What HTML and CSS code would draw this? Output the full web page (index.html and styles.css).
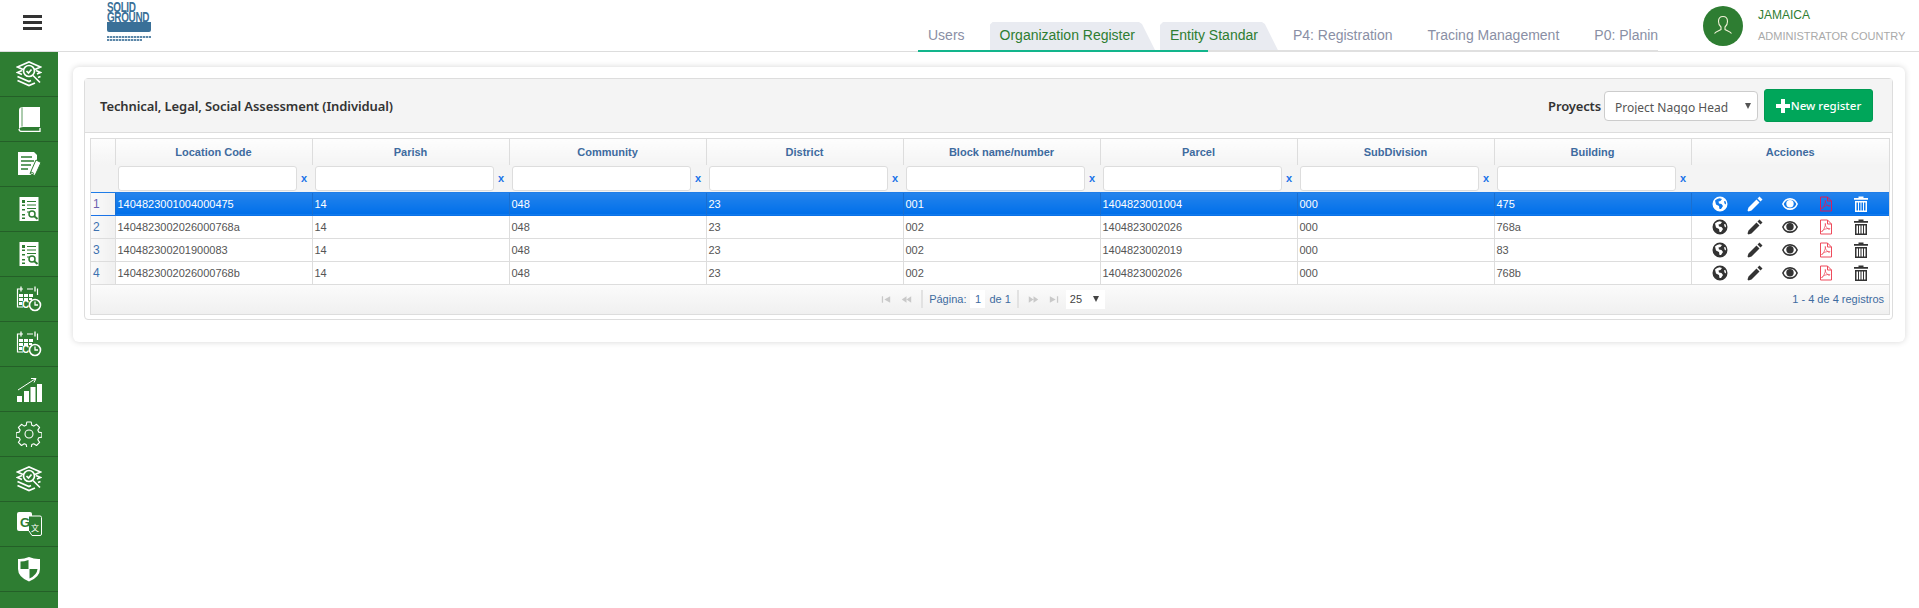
FILE: index.html
```html
<!DOCTYPE html>
<html lang="en">
<head>
    <meta charset="UTF-8">
    <title>Technical, Legal, Social Assessment</title>
    <link rel="stylesheet" href="styles.css">
</head>
<body>
    <!-- shared icons -->
    <svg class="defs" width="0" height="0">
        <symbol id="i-layers" viewBox="0 0 26 26">
            <path d="M7 8.500L1.500 6 13 1l11.500 5L19 8.500" fill="none" stroke="#fff" stroke-width="1.700"/>
            <path d="M6 9.500L1.500 11.500 6 13.500M20 9.500l4.500 2L21 13M1.500 15.500L13 20.500l2-1M1.500 19.500L13 24.500l6-2.500M24.500 15.500L22 16.500" fill="none" stroke="#fff" stroke-width="1.700"/>
            <circle cx="13" cy="10" r="5.500" fill="none" stroke="#fff" stroke-width="1.700"/>
            <path d="M10.500 10l2 2 3-3.500M17 14.500l7 7" fill="none" stroke="#fff" stroke-width="1.700"/>
        </symbol>
        <symbol id="i-book" viewBox="0 0 26 26">
            <path d="M7 1h17v20H7q-3 0-4 2V4q0-3 4-3z" fill="#fff"/>
            <path d="M3 23q0 2.500 3 2.500h18V22" fill="none" stroke="#fff" stroke-width="1.300"/>
            <path d="M6 1.500v19" stroke="#2e7d32" stroke-width=".8"/>
        </symbol>
        <symbol id="i-doc" viewBox="0 0 26 26">
            <path d="M2 1h16l3 3v9l-6 11H2z" fill="#fff"/>
            <path d="M5 6h11M5 10h13M5 14h10M5 18h7" stroke="#2e7d32" stroke-width="1.600"/>
            <path d="M20 9l5 2.500-6 13-5-2z" fill="#fff" stroke="#2e7d32" stroke-width="1"/>
            <path d="M15 21l3 1.500" stroke="#2e7d32" stroke-width="1"/>
        </symbol>
        <symbol id="i-list" viewBox="0 0 26 26">
            <path d="M3.500 1h19v24h-19z" fill="#fff"/>
            <path d="M6 4h3v3H6zM6 8.500h3v1.500H6zM6 13h3v1.500H6zM6 18h3v1.500H6zM6 21.500h3V23H6z" fill="#2e7d32"/>
            <path d="M11 5.500h9M11 9h9M11 12.500h9M11 16h2" stroke="#2e7d32" stroke-width="1.200"/>
            <circle cx="16" cy="18" r="3" fill="none" stroke="#2e7d32" stroke-width="1.500"/>
            <path d="M18 20l3.500 3" stroke="#2e7d32" stroke-width="2"/>
        </symbol>
        <symbol id="i-cal" viewBox="0 0 26 26">
            <path d="M7 3H1.500v18H7M11 3h6M21 3h.5v6" fill="none" stroke="#fff" stroke-width="1.200"/>
            <path d="M5 .5v5M19 .5v5" stroke="#fff" stroke-width="1.300"/>
            <path d="M3 8h4v3H3zM8 8h4v3H8zM13 8h4v3h-4zM3 12h4v3H3zM8 12h4v3H8zM13 12h3v2h-3zM3 16h3v3H3z" fill="#fff"/>
            <circle cx="19" cy="19" r="5.500" fill="#2e7d32" stroke="#fff" stroke-width="1.600"/>
            <path d="M19 15.500V19h3" fill="none" stroke="#fff" stroke-width="1.300"/>
        </symbol>
        <symbol id="i-chart" viewBox="0 0 26 26">
            <path d="M2 14L19 3M15 2.500l5 0-2 4" fill="none" stroke="#fff" stroke-width="1"/>
            <path d="M1 20h5v6H1zM8 15h5v11H8zM14.500 11h5v15h-5zM21 8h5v18h-5z" fill="#fff"/>
        </symbol>
        <symbol id="i-gear" viewBox="0 0 26 26">
            <path d="M10.800 1h4.400l.6 3.200 2 .9 2.700-1.800 3.100 3.100-1.800 2.700.9 2 3.200.6v4.400l-3.200.6-.9 2 1.800 2.700-3.100 3.100-2.700-1.800-2 .9-.6 3.200h-4.400l-.6-3.200-2-.9-2.700 1.800-3.100-3.100 1.800-2.700-.9-2-3.200-.6v-4.400l3.200-.6.9-2-1.800-2.700 3.100-3.100 2.700 1.800 2-.9z" fill="none" stroke="#fff" stroke-width="1.100" stroke-linejoin="round"/>
            <circle cx="13" cy="13" r="4" fill="none" stroke="#fff" stroke-width="1.100"/>
        </symbol>
        <symbol id="i-trans" viewBox="0 0 26 26">
            <rect x="1" y="1" width="15" height="19" rx="2" fill="#fff"/>
            <path d="M13 5h11q1.500 0 1.500 1.500V23q0 1.500-1.500 1.500H16L13 20" fill="#2e7d32" stroke="#fff" stroke-width="1"/>
        </symbol>
        <symbol id="i-shield" viewBox="0 0 26 26">
            <path d="M13 1q6 2.500 11 2v10q0 8-11 12.500Q2 21 2 13V3q5 .5 11-2z" fill="#fff"/>
            <path d="M12.500 4Q8 5.500 4.500 5.500V13h8zM13.500 13h8q-.5 6-8 9.500z" fill="#2e7d32"/>
        </symbol>
        <symbol id="a-globe" viewBox="0 0 16 16">
            <path fill-rule="evenodd" d="M8 .5a7.500 7.500 0 1 0 0 15a7.500 7.500 0 0 0 0-15zM3 4.500q2-2 4.500-2.300L10 3 8.500 5 6.500 5.500 7 7.500 9.500 8 11 10 9 13 7.500 13 7 10 4 8.500zM12 5l1.800.5.200 3-1.500-1z"/>
        </symbol>
        <symbol id="a-pencil" viewBox="0 0 16 16">
            <path d="M12.500.5l3 3-2 2-3-3zM9.500 3.500l3 3-8 8-3 1-1-1 1-3z"/>
        </symbol>
        <symbol id="a-eye" viewBox="0 0 16 16">
            <path fill-rule="evenodd" d="M8 2Q13.500 2 16 8q-2.500 6-8 6T0 8Q2.500 2 8 2zM8 3.700Q3.500 3.700 1.700 8 3.500 12.300 8 12.300t6.300-4.300Q12.500 3.700 8 3.700z"/>
            <circle cx="8" cy="7.800" r="3.700"/>
        </symbol>
        <symbol id="a-pdf" viewBox="0 0 16 16">
            <path d="M2.500 1h7l4 4v10h-11zM9.500 1v4h4" fill="none" stroke="currentColor" stroke-width="1"/>
            <path d="M3.500 13q2.500-1.500 4-7 .3-2-.5-1.500-.5 2 3 5.500 2 .8 2-.3-1-1-6 .7-2 1.500-2.500 2.600z" fill="none" stroke="currentColor" stroke-width=".7"/>
        </symbol>
        <symbol id="a-trash" viewBox="0 0 16 16">
            <path d="M5.500 .5h5V2h4.500v1.800H1V2h4.500z"/>
            <path fill-rule="evenodd" d="M2 5h12v11H2zM3.500 6.500v8h1.500v-8zM6 6.500v8h1.500v-8zM8.500 6.500v8H10v-8zM11 6.500v8h1.500v-8z"/>
        </symbol>
    </svg>

    <header class="topbar">
        <button class="menu-toggle" type="button" aria-label="Menu"><span></span><span></span><span></span></button>

        <div class="logo">
            <div class="logo-word">SOLID</div>
            <div class="logo-word">GROUND</div>
            <div class="logo-block"></div>
            <div class="logo-small"></div>
            <div class="logo-small logo-small-short"></div>
        </div>

        <nav class="tabs">
            <div class="tabs-row">
                <a class="tab">Users</a>
                <a class="tab tab-open">Organization Register</a>
                <a class="tab tab-open">Entity Standar</a>
                <a class="tab">P4: Registration</a>
                <a class="tab">Tracing Management</a>
                <a class="tab">P0: Planing</a>
            </div>
            <div class="tabs-line"></div>
        </nav>

        <div class="user">
            <div class="avatar">
                <svg width="24" height="24" viewBox="0 0 24 24" fill="none" stroke="#f2f2d8" stroke-width="1.100">
                    <path d="M12 2.500c-3 0-4.500 2.300-4.500 5 0 2.500 1.200 4.500 2.500 5.500v2.500c-1.500 1.200-5 2-6.500 4M12 2.500c3 0 4.500 2.300 4.500 5 0 2.500-1.200 4.500-2.500 5.500v2.500c1.500 1.200 5 2 6.500 4"/>
                </svg>
            </div>
            <div class="user-text">
                <div class="user-name">JAMAICA</div>
                <div class="user-role">ADMINISTRATOR COUNTRY</div>
            </div>
        </div>
    </header>

    <div class="layout">
        <aside class="sidebar">
            <a class="side-item"><svg class="side-icon"><use href="#i-layers"/></svg></a>
            <a class="side-item"><svg class="side-icon"><use href="#i-book"/></svg></a>
            <a class="side-item"><svg class="side-icon"><use href="#i-doc"/></svg></a>
            <a class="side-item"><svg class="side-icon"><use href="#i-list"/></svg></a>
            <a class="side-item"><svg class="side-icon"><use href="#i-list"/></svg></a>
            <a class="side-item"><svg class="side-icon"><use href="#i-cal"/></svg><span class="cal-letter">C</span></a>
            <a class="side-item"><svg class="side-icon"><use href="#i-cal"/></svg><span class="cal-letter">C</span></a>
            <a class="side-item"><svg class="side-icon"><use href="#i-chart"/></svg></a>
            <a class="side-item"><svg class="side-icon"><use href="#i-gear"/></svg></a>
            <a class="side-item"><svg class="side-icon"><use href="#i-layers"/></svg></a>
            <a class="side-item"><svg class="side-icon"><use href="#i-trans"/></svg><span class="trans-g">G</span><span class="trans-x">文</span></a>
            <a class="side-item"><svg class="side-icon"><use href="#i-shield"/></svg></a>
        </aside>

        <main class="content">
            <section class="card">
                <div class="panel">
                    <div class="panel-head">
                        <h1 class="panel-title">Technical, Legal, Social Assessment (Individual)</h1>
                        <div class="panel-tools">
                            <label class="project-label">Proyects</label>
                            <div class="project-select">
                                <span>Project Naggo Head</span>
                                <i class="caret"></i>
                            </div>
                            <button class="btn-new" type="button"><span class="btn-plus"></span>New register</button>
                        </div>
                    </div>

                    <div class="panel-body">
                        <div class="grid">
                            <table class="grid-table">
                                <colgroup>
                                    <col class="col-num">
                                    <col span="8" class="col-data">
                                    <col>
                                </colgroup>
                                <thead>
                                    <tr class="head-row">
                                        <th></th>
                                        <th>Location Code</th>
                                        <th>Parish</th>
                                        <th>Community</th>
                                        <th>District</th>
                                        <th>Block name/number</th>
                                        <th>Parcel</th>
                                        <th>SubDivision</th>
                                        <th>Building</th>
                                        <th>Acciones</th>
                                    </tr>
                                    <tr class="filter-row">
                                        <th></th>
                                        <th><div class="filter"><input type="text"><b>x</b></div></th>
                                        <th><div class="filter"><input type="text"><b>x</b></div></th>
                                        <th><div class="filter"><input type="text"><b>x</b></div></th>
                                        <th><div class="filter"><input type="text"><b>x</b></div></th>
                                        <th><div class="filter"><input type="text"><b>x</b></div></th>
                                        <th><div class="filter"><input type="text"><b>x</b></div></th>
                                        <th><div class="filter"><input type="text"><b>x</b></div></th>
                                        <th><div class="filter"><input type="text"><b>x</b></div></th>
                                        <th></th>
                                    </tr>
                                </thead>
                                <tbody id="gridBody"></tbody>
                            </table>

                            <div class="pager">
                                <div></div>
                                <div class="pager-center">
                                    <svg class="pg" viewBox="0 0 12 8"><path d="M1 0h1.500v8H1zM11 0v8L4 4z"/></svg>
                                    <svg class="pg pg-wide" viewBox="0 0 14 8"><path d="M7 0v8L1 4zM13 0v8L7 4z"/></svg>
                                    <span class="pg-sep"></span>
                                    <span>Página:</span>
                                    <span class="pg-input">1</span>
                                    <span>de 1</span>
                                    <span class="pg-sep"></span>
                                    <svg class="pg pg-wide" viewBox="0 0 14 8"><path d="M1 0v8l6-4zM7 0v8l6-4z"/></svg>
                                    <svg class="pg" viewBox="0 0 12 8"><path d="M1 0v8l7-4zM9.500 0H11v8H9.500z"/></svg>
                                    <div class="pg-size"><span>25</span><i class="caret caret-dark"></i></div>
                                </div>
                                <div class="pager-info">1 - 4 de 4 registros</div>
                            </div>
                        </div>
                    </div>
                </div>
            </section>
        </main>
    </div>

    <script>
        // filas de la tabla
        const filas = [
            ["1404823001004000475", "14", "048", "23", "001", "1404823001004", "000", "475"],
            ["1404823002026000768a", "14", "048", "23", "002", "1404823002026", "000", "768a"],
            ["140482300201900083", "14", "048", "23", "002", "1404823002019", "000", "83"],
            ["1404823002026000768b", "14", "048", "23", "002", "1404823002026", "000", "768b"]
        ];
        const iconos = ["a-globe", "a-pencil", "a-eye", "a-pdf", "a-trash"];
        const tbody = document.getElementById("gridBody");

        filas.forEach(function(fila, i) {
            const row = tbody.insertRow();
            if (i === 0) row.classList.add("selected");

            const num = row.insertCell();
            num.textContent = i + 1;
            num.classList.add("num");

            fila.forEach(function(valor) {
                row.insertCell().textContent = valor;
            });

            const acciones = row.insertCell();
            const caja = document.createElement("div");
            caja.className = "actions";
            caja.innerHTML = iconos.map(function(id) {
                return '<svg class="action ' + id + '"><use href="#' + id + '"/></svg>';
            }).join("");
            acciones.appendChild(caja);
        });
    </script>
</body>
</html>
```

FILE: styles.css
```css
* {
    margin: 0;
    padding: 0;
    box-sizing: border-box;
}

html, body {
    height: 100%;
    overflow: hidden;
}

body {
    font-family: "Liberation Sans", Arial, sans-serif;
    font-size: 11px;
    color: #555;
    background: #fff;
}

.defs {
    position: absolute;
}

/* top bar */
.topbar {
    height: 52px;
    display: flex;
    border-bottom: 1px solid #ddd;
    background: #fff;
}

.menu-toggle {
    width: 58px;
    height: 51px;
    padding: 15px 0 0 23px;
    display: flex;
    flex-direction: column;
    gap: 3px;
    border: none;
    background: none;
}

.menu-toggle span {
    display: block;
    width: 19px;
    height: 3px;
    background: #333;
}

.logo {
    width: 44px;
    margin: 2px 0 0 49px;
    color: #3a7098;
}

.logo-word {
    font-family: "Liberation Sans", Arial, sans-serif;
    font-weight: bold;
    font-size: 15px;
    line-height: 10px;
    letter-spacing: -.5px;
    transform: scaleX(.66);
    transform-origin: left;
    white-space: nowrap;
}

.logo-block {
    height: 10px;
    background: #3a7098;
    border-radius: 0 0 2px 2px;
}

.logo-small {
    height: 2px;
    margin-top: 4px;
    background: repeating-linear-gradient(90deg, #5c87a8 0 2px, #c4d4e0 2px 3px);
}

.logo-small + .logo-small {
    margin-top: 1px;
}

.logo-small-short {
    width: 35px;
}

/* tabs */
.tabs {
    width: 740px;
    margin: 22px 0 -1px 767px;
    overflow: hidden;
}

.tabs-row {
    display: flex;
    height: 28px;
    white-space: nowrap;
}

.tabs-line {
    height: 2px;
    background: linear-gradient(90deg, #12b58c 290px, #e0e0e0 290px);
}

.tab {
    flex: none;
    padding: 5px 25px 0 10px;
    font-size: 14px;
    line-height: 16px;
    color: #8a8fa5;
}

.tab-open {
    margin-left: 0;
    color: #2e7d32;
    background: #e9ebf1;
    clip-path: polygon(3px 0, calc(100% - 21px) 0, calc(100% - 18px) 2px, calc(100% - 5px) 100%, 0 100%, 0 3px);
}

/* user */
.user {
    display: flex;
    margin-left: 45px;
    padding-top: 6px;
}

.avatar {
    width: 40px;
    height: 40px;
    display: flex;
    align-items: center;
    justify-content: center;
    border-radius: 50%;
    background: #2e7d32;
}

.user-text {
    margin-left: 15px;
    font-size: 11px;
    white-space: nowrap;
}

.user-name {
    margin-top: 2px;
    font-size: 12px;
    line-height: 14px;
    color: #2e7d32;
}

.user-role {
    margin-top: 7px;
    line-height: 14px;
    color: #a9a9a9;
}

/* sidebar */
.layout {
    display: flex;
    height: 556px;
}

.sidebar {
    flex: none;
    width: 58px;
    height: 100%;
    overflow: hidden;
    background: #2e7d32;
}

.side-item {
    position: relative;
    height: 45px;
    display: flex;
    align-items: center;
    justify-content: center;
    border-bottom: 1px solid #245f28;
}

.side-icon {
    width: 26px;
    height: 26px;
}

.cal-letter {
    position: absolute;
    left: 22px;
    top: 22px;
    font-size: 10px;
    line-height: 12px;
    font-weight: bold;
    color: #fff;
}

.trans-g {
    position: absolute;
    left: 20px;
    top: 13px;
    font-size: 13px;
    line-height: 15px;
    font-weight: bold;
    color: #2e7d32;
}

.trans-x {
    position: absolute;
    left: 31px;
    top: 21px;
    font-family: "Noto Sans CJK SC", sans-serif;
    font-size: 8px;
    line-height: 10px;
    color: #fff;
}

/* content */
.content {
    flex: 1;
    padding: 15px 14px 0 15px;
}

.card {
    padding: 11px 12px 22px 11px;
    background: #fff;
    border-radius: 6px;
    box-shadow: 0 0 6px rgba(0, 0, 0, .16);
}

.panel {
    border: 1px solid #ddd;
    border-radius: 4px;
}

.panel-head {
    height: 54px;
    padding: 0 15px;
    display: flex;
    align-items: center;
    justify-content: space-between;
    background: #f4f4f4;
    border-bottom: 1px solid #ddd;
}

.panel-title {
    font-family: "Noto Sans", sans-serif;
    font-size: 13px;
    font-weight: 600;
    letter-spacing: -.1px;
    color: #333;
}

.panel-tools {
    display: flex;
    align-items: center;
    margin-right: 4px;
}

.project-label {
    font-family: "Noto Sans", sans-serif;
    font-size: 13px;
    font-weight: 600;
    letter-spacing: -.15px;
    color: #333;
}

.project-select {
    position: relative;
    width: 154px;
    height: 30px;
    margin-left: 3px;
    padding: 9px 0 0 10px;
    font-family: "Noto Sans", sans-serif;
    font-size: 12px;
    color: #555;
    background: #fff;
    border: 1px solid #ccc;
    border-radius: 4px;
    overflow: hidden;
}

.project-select span {
    display: block;
    height: 13px;
    overflow: hidden;
    line-height: 13px;
}

.caret {
    position: absolute;
    top: 11px;
    right: 6px;
    border-left: 3.500px solid transparent;
    border-right: 3.500px solid transparent;
    border-top: 6px solid #555;
}

.btn-new {
    height: 33px;
    width: 109px;
    margin-left: 6px;
    display: flex;
    align-items: center;
    justify-content: center;
    font-family: "Noto Sans", sans-serif;
    font-size: 11.500px;
    font-weight: 500;
    color: #fff;
    background: #00a65a;
    border: 1px solid #009a52;
    border-radius: 3px;
}

.btn-plus {
    width: 14px;
    height: 14px;
    margin-right: 1px;
    background: linear-gradient(#fff, #fff) center / 14px 4px no-repeat, linear-gradient(#fff, #fff) center / 4px 14px no-repeat;
}

.panel-body {
    padding: 5px 2px 4px 5px;
}

/* grid */
.grid {
    border: 1px solid #ddd;
    background: #fff;
}

.grid-table {
    width: 100%;
    table-layout: fixed;
    border-collapse: collapse;
}

.col-num {
    width: 24px;
}

.col-data {
    width: 197px;
}

.head-row th {
    height: 26px;
    font-size: 11px;
    font-weight: bold;
    color: #3e6b9f;
    background: linear-gradient(#fdfdfd, #f4f4f4);
    border-left: 1px solid #ddd;
}

.filter-row th {
    height: 27px;
    background: #f4f4f4;
}

.head-row th:first-child, .filter-row th:first-child {
    border-left: none;
}

.filter {
    display: flex;
    align-items: center;
    padding-left: 3px;
}

.filter input {
    width: 179px;
    height: 25px;
    background: #fff;
    border: 1px solid #ddd;
    border-radius: 3px;
}

.filter b {
    margin-left: 4px;
    font-size: 11px;
    color: #1a73e8;
}

.grid-table td {
    height: 23px;
    padding: 0 2px;
    font-size: 11px;
    white-space: nowrap;
    color: #555;
    border: 1px solid #ddd;
    border-right: none;
}

.grid-table tr td:first-child {
    border-left: none;
}

.grid-table td.num {
    padding-left: 2px;
    font-size: 12px;
    color: #3e72b0;
    background: linear-gradient(90deg, #fafafa, #f0f0f0);
}

.selected td {
    color: #fff;
    background: linear-gradient(#2584ec, #006fea);
    border-top-color: #1f7de8;
    border-left-color: #1a6fd0;
    border-bottom-color: #0a72ea;
}

.grid-table .selected td.num {
    color: #6a5fb0;
    border-bottom: 1px solid #1a73e8;
}

.actions {
    display: flex;
    justify-content: space-between;
    padding: 0 18px;
    color: #333;
}

.selected .actions {
    color: #fff;
}

.action {
    width: 16px;
    height: 16px;
    fill: currentColor;
}

.action.a-pdf {
    color: #ee4b5c;
    fill: none;
}

.selected .action.a-pdf {
    color: #d81e5b;
}

/* pager */
.pager {
    height: 29px;
    display: grid;
    grid-template-columns: 1fr auto 1fr;
    align-items: center;
    color: #3e6b9f;
    background: linear-gradient(#fbfbfb, #f0f0f0);
}

.pager-center {
    display: flex;
    align-items: center;
    gap: 4px;
    padding-left: 3px;
}

.pg {
    width: 10px;
    height: 7px;
    margin: 0 3px;
    fill: #c9c9c9;
}

.pg-wide {
    width: 11px;
}

.pg-sep {
    width: 2px;
    height: 18px;
    margin: 0 2px;
    background: #e2e2e2;
}

.pg-input {
    width: 15px;
    height: 18px;
    line-height: 18px;
    text-align: center;
    background: #fff;
}

.pg-size {
    position: relative;
    width: 39px;
    height: 19px;
    padding-left: 4px;
    line-height: 19px;
    color: #444;
    background: #fff;
}

.caret-dark {
    top: 6px;
    right: 6px;
    border-top-color: #444;
}

.pager-info {
    padding-right: 5px;
    text-align: right;
}
```
